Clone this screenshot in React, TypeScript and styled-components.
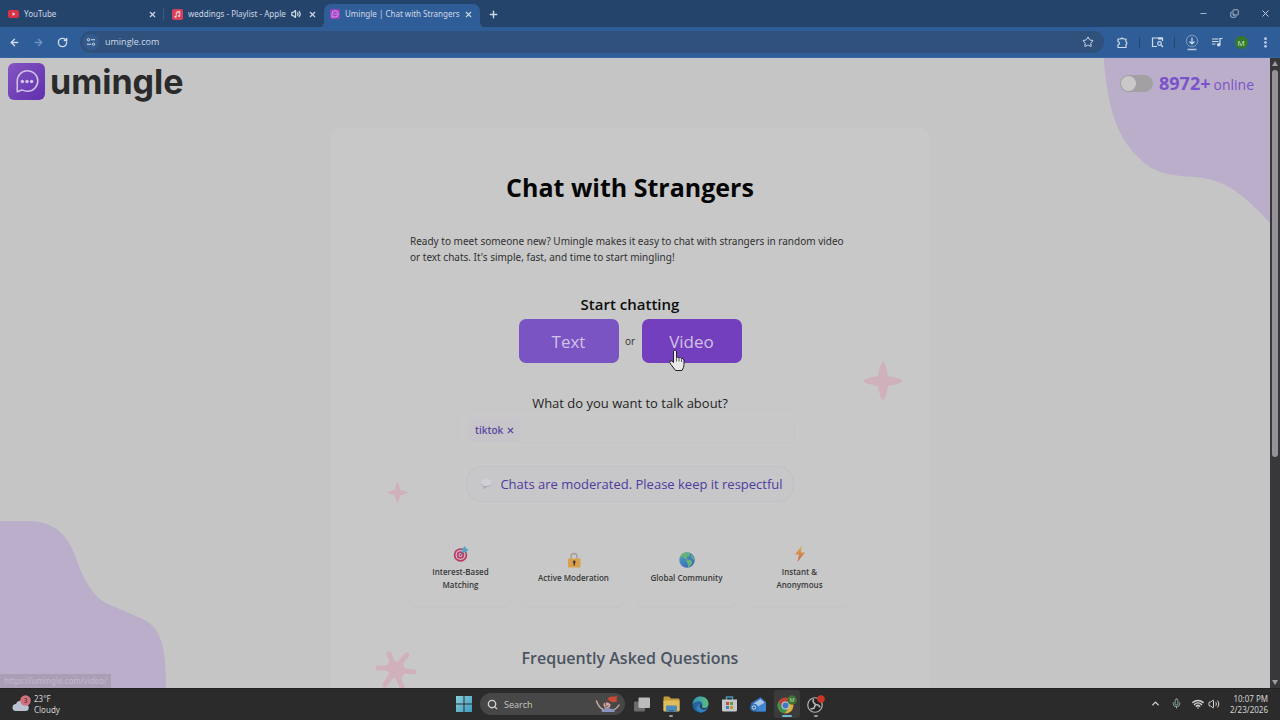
import React from 'react';
import styled, { createGlobalStyle } from 'styled-components';
import {
  ArrowLeft, ArrowRight, RotateCw, X, Plus, Minus, Volume2, Star, EllipsisVertical,
  Search, ChevronUp, Mic, Wifi, Copy,
} from 'lucide-react';

const Global = createGlobalStyle`
  *, *::before, *::after { box-sizing: border-box; }
  html, body, #root { height: 100%; }
  body { margin: 0; font-family: "Open Sans", "Noto Sans", sans-serif; color: #303030; background: #c5c5c5; }
  h1, h2, h3, p, ul { margin: 0; padding: 0; }
  button, input { font: inherit; color: inherit; border: 0; padding: 0; background: none; outline: none; }
  svg { display: block; flex: none; }
`;

const Screen = styled.div`
  height: 100vh;
  display: flex;
  flex-direction: column;
  overflow: hidden;
`;

/* ---------- browser chrome ---------- */

const TabStrip = styled.div`
  display: flex;
  height: 28px;
  flex: none;
  background: #25446c;
  color: #cfd9e6;
  border-bottom: 1px solid #2f5d97;
`;

const Tab = styled.div<{ $active?: boolean; $width: number; $divider?: boolean }>`
  position: relative;
  display: flex;
  align-items: center;
  gap: 5px;
  width: ${p => p.$width}px;
  height: 24px;
  margin-top: 4px;
  padding: 0 6px 4px ${p => (p.$active ? 6 : 8)}px;
  border-radius: 7px 7px 0 0;
  background: ${p => (p.$active ? '#2f5d97' : 'transparent')};
  font-family: "Noto Sans", sans-serif;
  font-size: 8px;
  line-height: 12px;
  ${p => p.$divider && `
    &::after {
      content: '';
      position: absolute;
      right: 0;
      top: 4px;
      width: 1px;
      height: 12px;
      background: #3c5c86;
    }
  `}
  ${p => p.$active && `
    &::before, &::after {
      content: '';
      position: absolute;
      bottom: 0;
      width: 6px;
      height: 6px;
    }
    &::before { left: -6px; background: radial-gradient(circle at 0 0, transparent 6px, #2f5d97 6px); }
    &::after { right: -6px; background: radial-gradient(circle at 100% 0, transparent 6px, #2f5d97 6px); }
  `}
`;

const TabTitle = styled.span`
  flex: 1;
  min-width: 0;
  white-space: nowrap;
`;

const TabControls = styled.div`
  display: flex;
  gap: 4px;
`;

const IconButton = styled.button<{ $size?: number }>`
  display: flex;
  align-items: center;
  justify-content: center;
  flex: none;
  width: ${p => p.$size ?? 12}px;
  height: ${p => p.$size ?? 12}px;
`;

const NewTab = styled(IconButton)`
  margin: 5px 0 0 4px;
`;

const WindowControls = styled.div`
  display: flex;
  gap: 15px;
  margin: 5px 7px 0 auto;
`;

const Toolbar = styled.div`
  display: flex;
  align-items: center;
  height: 30px;
  flex: none;
  padding: 0 7px 1px 6px;
  background: #2f5d97;
  color: #cfdcec;
  border-bottom: 1px solid #3668a6;
`;

const NavButtons = styled.div`
  display: flex;
  gap: 8px;
  margin-right: 10px;
`;

const Address = styled.label`
  display: flex;
  align-items: center;
  flex: 1;
  gap: 6px;
  height: 22px;
  padding: 0 10px 0 3px;
  border-radius: 11px;
  background: #30517c;
`;

const SiteInfo = styled.span`
  display: flex;
  align-items: center;
  justify-content: center;
  width: 16px;
  height: 16px;
  border-radius: 8px;
  background: #345b8c;
`;

const AddressInput = styled.input`
  flex: 1;
  min-width: 0;
  font-size: 9px;
  line-height: 16px;
`;

const Extensions = styled.div`
  display: flex;
  align-items: center;
  gap: 8px;
  margin-left: 9px;
`;

const Divider = styled.span`
  width: 1px;
  height: 11px;
  background: #24466f;
`;

const Avatar = styled.span`
  display: flex;
  align-items: center;
  justify-content: center;
  width: 13px;
  height: 13px;
  border-radius: 7px;
  background: #357a2c;
  color: #d5e2d0;
  font-size: 8px;
`;

/* ---------- page ---------- */

const Viewport = styled.div`
  position: relative;
  display: flex;
  flex: 1;
  min-height: 0;
`;

const Page = styled.div`
  position: relative;
  flex: 1;
  min-width: 0;
  overflow: hidden;
  background: #c5c5c5;
  padding-right: 10px;
`;

const Blob = styled.svg<{ $corner: 'top' | 'bottom' }>`
  position: absolute;
  ${p => (p.$corner === 'top' ? 'top: 0; right: 0;' : 'bottom: 0; left: 0;')}
`;

const Header = styled.header`
  position: relative;
  display: flex;
  justify-content: space-between;
  height: 70px;
  padding: 5px 6px 0 8px;
`;

const Brand = styled.a`
  display: flex;
  align-items: flex-start;
  gap: 5px;
  color: #2a2a2b;
  text-decoration: none;
`;

const BrandName = styled.span`
  font-family: Inter, "Open Sans", sans-serif;
  font-size: 34px;
  font-weight: 700;
  line-height: 38px;
`;

const Online = styled.label`
  display: flex;
  align-items: center;
  gap: 3px;
  height: 40px;
  color: #7a52c9;
  font-size: 14px;
  line-height: 20px;
`;

const OnlineWord = styled.span`
  padding-top: 3px;
`;

const Toggle = styled.input`
  appearance: none;
  width: 33px;
  height: 17px;
  margin: 0 3px 0 0;
  padding: 1px;
  border-radius: 9px;
  background: #a2a0a3;
  &::before {
    content: '';
    display: block;
    width: 15px;
    height: 15px;
    border-radius: 8px;
    background: #cac8c9;
  }
`;

const Count = styled.strong`
  font-size: 18px;
`;

const Card = styled.main`
  position: relative;
  width: 598px;
  max-width: 100%;
  margin: 0 auto;
  padding: 39px 79px 40px;
  background: #c8c8c8;
  border-radius: 8px;
  display: flex;
  flex-direction: column;
  align-items: center;
`;

const Title = styled.h1`
  color: #050505;
  font-size: 25px;
  font-weight: 700;
  line-height: 40px;
`;

const Intro = styled.p`
  align-self: stretch;
  margin: 26px 0 29px;
  font-family: "Noto Sans", sans-serif;
  font-size: 10px;
  line-height: 16px;
`;

const StartHeading = styled.h2`
  color: #0c0c0c;
  font-size: 15px;
  font-weight: 600;
  line-height: 20px;
`;

const Choices = styled.div`
  display: flex;
  align-items: center;
  justify-content: center;
  margin: 5px 0 30px;
  font-size: 10px;
`;

const Or = styled.span`
  width: 23px;
  text-align: center;
`;

const ChatButton = styled.button<{ $hover?: boolean }>`
  position: relative;
  width: 100px;
  height: 44px;
  border-radius: 7px;
  background: ${p => (p.$hover ? '#743fbe' : '#7b54c4')};
  color: #d0c2e4;
  font-size: 17px;
`;

const Pointer = styled.svg`
  position: absolute;
  left: 27px;
  top: 30px;
`;

const TopicLabel = styled.label`
  font-size: 13px;
  line-height: 20px;
  color: #252525;
`;

const TopicField = styled.div`
  display: flex;
  align-items: center;
  gap: 6px;
  width: 336px;
  height: 32px;
  margin: 1px 0 20px;
  padding: 0 6px;
  border: 1px solid #cccccc;
  border-radius: 7px;
`;

const Tag = styled.span`
  display: flex;
  align-items: center;
  gap: 3px;
  height: 24px;
  padding: 0 6px;
  border-radius: 6px;
  background: #c7c5ca;
  color: #5a459f;
  font-size: 10px;
  font-weight: 600;
`;

const TopicInput = styled.input`
  flex: 1;
  min-width: 0;
  font-size: 10px;
`;

const Notice = styled.p`
  display: flex;
  align-items: center;
  gap: 7px;
  height: 36px;
  padding: 0 10px 0 13px;
  border: 1px solid #c0c0c4;
  border-radius: 16px;
  background: #c7c7c9;
  color: #4f3a9f;
  font-size: 13px;
`;

const Features = styled.ul`
  display: grid;
  grid-template-columns: repeat(4, 1fr);
  gap: 12px;
  width: 100%;
  margin: 32px 0 38px;
  list-style: none;
`;

const Feature = styled.li`
  display: flex;
  flex-direction: column;
  align-items: center;
  justify-content: center;
  gap: 3px;
  height: 72px;
  padding-bottom: 4px;
  border-radius: 8px;
  box-shadow: 0 2px 3px rgba(0, 0, 0, 0.02);
  color: #383838;
  font-size: 8px;
  font-weight: 600;
  line-height: 13px;
  text-align: center;
`;

const FeatureText = styled.span<{ $narrow?: boolean }>`
  max-width: ${p => (p.$narrow ? 64 : 96)}px;
`;

const FaqHeading = styled.h2`
  color: #4a5460;
  font-size: 16px;
  font-weight: 600;
  line-height: 28px;
`;

const Sparkle = styled.svg<{ $x: number; $y: number }>`
  position: absolute;
  left: ${p => p.$x}px;
  top: ${p => p.$y}px;
`;

const StatusBubble = styled.div`
  position: absolute;
  left: 0;
  bottom: 0;
  height: 14px;
  padding: 0 4px;
  background: #aa9eb7;
  color: #c2b8ce;
  font-family: "Noto Sans", sans-serif;
  font-size: 8px;
  line-height: 14px;
`;

const ScrollTrack = styled.div`
  display: flex;
  flex-direction: column;
  align-items: center;
  width: 10px;
  padding: 3px 0;
  background: #38373a;
`;

const ScrollThumb = styled.div`
  width: 6px;
  height: 62%;
  margin: 4px 0 auto;
  border-radius: 3px;
  background: #959397;
`;

/* ---------- taskbar ---------- */

const Taskbar = styled.footer`
  display: grid;
  grid-template-columns: 1fr auto 1fr;
  align-items: center;
  height: 32px;
  flex: none;
  background: #2b2b2b;
  border-top: 1px solid #222;
  color: #d4d4d4;
  font-size: 9px;
  line-height: 11px;
`;

const Weather = styled.div`
  display: flex;
  align-items: center;
  gap: 3px;
  padding: 0 0 1px 12px;
  font-family: "Noto Sans", sans-serif;
  font-size: 8px;
`;

const Dock = styled.nav`
  display: flex;
  align-items: center;
  gap: 3px;
  padding-bottom: 1px;
`;

const SearchBox = styled.label`
  display: flex;
  align-items: center;
  gap: 6px;
  width: 145px;
  height: 22px;
  margin: 0 1px 0 0;
  padding: 0 4px 0 7px;
  border-radius: 11px;
  background: #474747;
`;

const SearchInput = styled.input`
  flex: 1;
  min-width: 0;
  font-size: 9px;
  &::placeholder { color: #c6c6c6; opacity: 1; }
`;

const DockButton = styled.button<{ $mark?: 'open' | 'active' }>`
  position: relative;
  display: flex;
  align-items: center;
  justify-content: center;
  width: 26px;
  height: 28px;
  border-radius: 3px;
  background: ${p => (p.$mark === 'active' ? '#3b3b3b' : 'transparent')};
  ${p => p.$mark && `
    &::after {
      content: '';
      position: absolute;
      bottom: 1px;
      width: ${p.$mark === 'active' ? 10 : 4}px;
      height: 2px;
      border-radius: 1px;
      background: ${p.$mark === 'active' ? '#6fb7d2' : '#9b9b9b'};
    }
  `}
`;

const Tray = styled.div`
  display: flex;
  align-items: center;
  justify-content: flex-end;
  padding: 0 12px 2px 0;
`;

const TrayIcons = styled.div`
  display: flex;
  align-items: center;
  gap: 10px;
`;

const NetworkIcons = styled.div`
  display: flex;
  gap: 4px;
`;

const Clock = styled.time`
  margin-left: 10px;
  font-family: "Noto Sans", sans-serif;
  font-size: 8px;
  text-align: right;
`;

/* ---------- drawings ---------- */

const YouTubeIcon = () => (
  <svg width="11" height="8" viewBox="0 0 22 16">
    <rect width="22" height="16" rx="4" fill="#dc3045" />
    <path d="M9 4.5 15 8l-6 3.5z" fill="#e6dfe4" />
  </svg>
);

const MusicIcon = () => (
  <svg width="11" height="11" viewBox="0 0 22 22">
    <rect width="22" height="22" rx="4" fill="#d8405a" />
    <path d="M8.5 15V6l7-1.500v9" fill="none" stroke="#e8d5dc" strokeWidth="1.800" />
    <path d="M8.500 8.500l7-1.500" stroke="#e8d5dc" strokeWidth="1.800" />
    <ellipse cx="7" cy="15.500" rx="2.300" ry="1.900" fill="#e8d5dc" />
    <ellipse cx="14" cy="14" rx="2.300" ry="1.900" fill="#e8d5dc" />
  </svg>
);

const Bubble = ({ size }: { size: number }) => (
  <svg width={size} height={size} viewBox="0 0 36 36">
    <defs>
      <linearGradient id="brand" x1="0" y1="0" x2="1" y2="1">
        <stop offset="0" stopColor="#8454c4" />
        <stop offset="1" stopColor="#5f30ac" />
      </linearGradient>
    </defs>
    <rect width="36" height="36" rx="6" fill="url(#brand)" />
    <path d="M9 28V18a10 10 0 1 1 10 9.500c-2.500 0-4-.5-5.500-1.300Z" fill="none" stroke="#d3c3e6" strokeWidth="1.500" strokeLinejoin="round" />
    <circle cx="14" cy="18" r="1.700" fill="#d3c3e6" />
    <circle cx="18.500" cy="18" r="1.700" fill="#d3c3e6" />
    <circle cx="23" cy="18" r="1.700" fill="#d3c3e6" />
  </svg>
);

const TabBubble = () => (
  <svg width="10" height="10" viewBox="0 0 20 20">
    <rect width="20" height="20" rx="3" fill="#a03fc0" />
    <path d="M4 16v-6a6.200 6.200 0 1 1 6 6Z" fill="none" stroke="#d9bdec" strokeWidth="1.600" />
    <path d="M7 10h7" stroke="#d9bdec" strokeWidth="2" strokeDasharray="1.600 1" />
  </svg>
);

const TuneIcon = () => (
  <svg width="10" height="10" viewBox="0 0 20 20" fill="none" stroke="#cfdcec" strokeWidth="2">
    <circle cx="5" cy="5.500" r="2.300" />
    <path d="M10 5.500h8M2 14.500h8" />
    <circle cx="15" cy="14.500" r="2.300" />
  </svg>
);

const PuzzleIcon = () => (
  <svg width="13" height="13" viewBox="0 0 26 26" fill="none" stroke="#cfdcec" strokeWidth="2.400" strokeLinejoin="round">
    <path d="M4 6h5.500a2.600 2.600 0 0 1 5 0H20v6a2.600 2.600 0 0 1 0 5v6H4v-5.500a3 3 0 0 0 0-6Z" />
  </svg>
);

const LensIcon = () => (
  <svg width="13" height="12" viewBox="0 0 26 24" fill="none" stroke="#cfdcec" strokeWidth="2.400">
    <path d="M12 21H3V4h20v6" />
    <path d="M14 5h9" strokeWidth="4" />
    <circle cx="17" cy="15" r="3.600" />
    <path d="m20 18 4 4" />
  </svg>
);

const DownloadIcon = () => (
  <svg width="14" height="18" viewBox="0 0 28 36" fill="none" stroke="#b4c8de" strokeWidth="2">
    <circle cx="14" cy="16" r="11.500" stroke="#7f9cc0" />
    <path d="M14 9v13M9 17l5 5 5-5" stroke="#cfdcec" strokeWidth="2.400" />
    <path d="M5 33h18" strokeWidth="3" />
  </svg>
);

const QueueIcon = () => (
  <svg width="12" height="12" viewBox="0 0 24 24" fill="none" stroke="#cfdcec" strokeWidth="2.400">
    <path d="M2 6h13M2 11h13M2 16h7M18 17V5h5" />
    <circle cx="15.500" cy="17.500" r="2.400" fill="#cfdcec" />
  </svg>
);

const TargetIcon = () => (
  <svg width="16" height="16" viewBox="0 0 32 32">
    <circle cx="15" cy="18" r="13.500" fill="#b93a68" />
    <circle cx="15" cy="18" r="10" fill="#d5c3cb" />
    <circle cx="15" cy="18" r="7.500" fill="#b93a68" />
    <circle cx="15" cy="18" r="4" fill="#d5c3cb" />
    <circle cx="15" cy="18" r="2" fill="#b93a68" />
    <path d="m15 18 8-9" stroke="#3d6c93" strokeWidth="2" />
    <path d="m19 13-1-7 6-6 2 5 5 2-6 6z" fill="#51a5c6" />
  </svg>
);

const LockIcon = () => (
  <svg width="16" height="16" viewBox="0 0 32 32">
    <path d="M10 15V9a6 6 0 0 1 12 0v6" fill="none" stroke="#a3a09b" strokeWidth="3" />
    <rect x="4" y="13" width="25" height="18" rx="2" fill="#d8a04a" />
    <circle cx="16.500" cy="20" r="2.800" fill="#4a3543" />
    <path d="M16.500 21v6" stroke="#4a3543" strokeWidth="2.600" />
  </svg>
);

const GlobeIcon = () => (
  <svg width="16" height="16" viewBox="0 0 32 32">
    <defs>
      <linearGradient id="sea" x1="0" y1="0" x2="1" y2="1">
        <stop offset="0" stopColor="#4fa0c4" />
        <stop offset="1" stopColor="#3560b5" />
      </linearGradient>
    </defs>
    <circle cx="16" cy="16" r="15.500" fill="url(#sea)" />
    <path d="M8 3c5-3 12-2 15 0l-2 5-6 2 2 5-5-1-4-4-6 2c0-4 3-7 6-9ZM16 15l8 1 3 5-6 9-3-1-1-7-3-4z" fill="#65b277" />
    <path d="m25 5 4 5 1 7-4-4-2-4z" fill="#65b277" />
  </svg>
);

const BoltIcon = () => (
  <svg width="16" height="16" viewBox="0 0 32 32">
    <defs>
      <linearGradient id="bolt" x1="0" y1="0" x2="0" y2="1">
        <stop offset="0" stopColor="#dfae50" />
        <stop offset="1" stopColor="#c96342" />
      </linearGradient>
    </defs>
    <path d="M19 0 6 17h8l-3 15L26 13h-8z" fill="url(#bolt)" />
  </svg>
);

const SpeechIcon = () => (
  <svg width="13" height="12" viewBox="0 0 26 24">
    <path d="M24 9c0 5-5 9-11 9l-7 5 1-6C4 15 2 12 2 9Z" fill="#a9a7b0" />
    <ellipse cx="13" cy="9" rx="11" ry="7.500" fill="#cfced4" />
  </svg>
);

const WeatherIcon = () => (
  <svg width="19" height="18" viewBox="0 0 38 36">
    <path d="M8 32a7 7 0 0 1 0-14 10 10 0 0 1 19 1 6.500 6.500 0 0 1 0 13Z" fill="#b9c3d2" />
    <circle cx="27" cy="11" r="10.500" fill="#d3737f" />
    <text x="27" y="16" fontSize="14" textAnchor="middle" fill="#42242b">3</text>
  </svg>
);

const WindowsIcon = () => (
  <svg width="16" height="16" viewBox="0 0 32 32">
    <defs>
      <linearGradient id="win" x1="0" y1="0" x2="1" y2="1">
        <stop offset="0" stopColor="#88cbdc" />
        <stop offset="1" stopColor="#3d9ec0" />
      </linearGradient>
    </defs>
    <path d="M0 0h15v15H0zM17 0h15v15H17zM0 17h15v15H0zM17 17h15v15H17z" fill="url(#win)" />
  </svg>
);

const ActorIcon = () => (
  <svg width="26" height="18" viewBox="0 0 52 36">
    <path d="M3 12q4 12 13 17M48 20q-4 7-11 10" fill="none" stroke="#c8a79b" strokeWidth="3" strokeLinecap="round" />
    <path d="M13 34q1-9 13-8t14 8Z" fill="#8a92bd" />
    <circle cx="24" cy="19" r="7" fill="#d3b0a5" />
    <path d="M16 17q0-6 9-7l8 4-2 5-5-4q-5 0-10 2Z" fill="#5b4248" />
    <path d="M25 8q2-5 9-5h11l-2 5 1 5q-7 3-13 0Z" fill="#c94a35" />
    <circle cx="21" cy="18" r="1.500" fill="#342c35" />
    <path d="M20 22q4 2 7-1" stroke="#783441" strokeWidth="2" fill="none" />
  </svg>
);

const TaskViewIcon = () => (
  <svg width="16" height="15" viewBox="0 0 32 30">
    <rect y="9" width="22" height="20" rx="2" fill="#6c6c6c" />
    <rect x="9" y="1" width="23" height="21" rx="2" fill="#bcbcbc" />
  </svg>
);

const FolderIcon = () => (
  <svg width="17" height="16" viewBox="0 0 34 32">
    <path d="M1 3q0-2 2-2h9l4 4h15q2 0 2 2v22H1Z" fill="#c59b3c" />
    <path d="M1 9h32v20q0 2-2 2H3q-2 0-2-2Z" fill="#dfbd5c" />
    <path d="M6 31V21q0-2 2-2h18q2 0 2 2v10Z" fill="#4b89bb" />
    <path d="M12 31v-3h10v3Z" fill="#336a9b" />
  </svg>
);

const EdgeIcon = () => (
  <svg width="17" height="17" viewBox="0 0 34 34">
    <defs>
      <linearGradient id="edge" x1="0" y1="0" x2="1" y2="0">
        <stop offset="0" stopColor="#3090c2" />
        <stop offset="1" stopColor="#5dbd78" />
      </linearGradient>
    </defs>
    <circle cx="17" cy="17" r="16" fill="#25639f" />
    <path d="M1 17C2 6 9 1 17 1c10 0 16 7 16 14 0 6-5 9-10 9-4 0-5-2-3-4 4-6-5-12-12-8-4 1-6 3-7 5Z" fill="url(#edge)" />
    <path d="M16 16q-4 8 6 12 5 1 9-3-5 8-14 8Q5 28 11 19q2-3 5-3Z" fill="#347fc0" />
    <path d="M17 17q-2 7 5 9 5 1 8-2-4 1-8 0-4-1-2-4 1-2-3-3Z" fill="#27343d" />
  </svg>
);

const StoreIcon = () => (
  <svg width="17" height="16" viewBox="0 0 34 32">
    <path d="M11 8V2h12v6" fill="none" stroke="#4b93b9" strokeWidth="3" />
    <path d="M2 7h30v21q0 3-3 3H5q-3 0-3-3Z" fill="#c3c7cb" />
    <path d="M10 12h6v6h-6z" fill="#c24d36" />
    <path d="M18 12h6v6h-6z" fill="#6a9c39" />
    <path d="M10 20h6v6h-6z" fill="#3984b2" />
    <path d="M18 20h6v6h-6z" fill="#c99834" />
  </svg>
);

const MailIcon = () => (
  <svg width="17" height="16" viewBox="0 0 34 32">
    <path d="m2 14 19-12 11 10v17q0 2-2 2H8q-4 0-6-4Z" fill="#336bb8" />
    <path d="m7 15 14-9 8 6-5 10H9Z" fill="#a7c5e4" />
    <path d="m12 23 20-11v17q0 2-2 2H12Z" fill="#3f86d0" />
    <circle cx="8" cy="23" r="7.500" fill="#3271b6" />
    <circle cx="8" cy="23" r="3.500" fill="none" stroke="#c3d6ea" strokeWidth="2" />
  </svg>
);

const ChromeIcon = () => (
  <svg width="20" height="19" viewBox="0 0 40 38">
    <circle cx="17" cy="21" r="16" fill="#bd4237" />
    <path d="M3 13a16 16 0 0 0 13 24l8-13H10Z" fill="#3c924c" />
    <path d="M16 37a16 16 0 0 0 15-23H17l7 10Z" fill="#d7af3e" />
    <circle cx="17" cy="21" r="8" fill="#c9cdd1" />
    <circle cx="17" cy="21" r="6" fill="#3c78c6" />
    <circle cx="30" cy="10" r="9.500" fill="#3d7430" />
    <text x="30" y="14" fontSize="11" textAnchor="middle" fill="#c5d8be">M</text>
  </svg>
);

const ObsIcon = () => (
  <svg width="18" height="18" viewBox="0 0 36 36">
    <circle cx="16" cy="20" r="14.500" fill="#242424" stroke="#b5b5b5" strokeWidth="2.400" />
    <path d="M13 8q-3 7 4 10M26 25q-3-7-9-5M7 27q8 2 9-6M17 18l-2 4" fill="none" stroke="#b5b5b5" strokeWidth="3.200" />
    <circle cx="28" cy="8" r="7.500" fill="#cf3428" />
  </svg>
);

const HandPointer = () => (
  <Pointer width="16" height="22" viewBox="0 0 32 44">
    <path d="M9 4q3-4 6 0v13q3-2 5 1 3-2 5 1 4-1 5 3v9q0 5-4 12H13L4 31q-4-5-2-7 3-2 7 3Z" fill="#e9e9e9" stroke="#24202b" strokeWidth="2" strokeLinejoin="round" />
    <path d="M15 18v7M20 19v6M25 20v6" stroke="#24202b" strokeWidth="1.400" />
  </Pointer>
);

const STAR = 'M20 0Q23 3 25 15Q37 17 40 20Q37 23 25 25Q23 37 20 40Q17 37 15 25Q3 23 0 20Q3 17 15 15Q17 3 20 0Z';

const features = [
  { icon: <TargetIcon />, text: 'Interest-Based Matching', narrow: true },
  { icon: <LockIcon />, text: 'Active Moderation' },
  { icon: <GlobeIcon />, text: 'Global Community' },
  { icon: <BoltIcon />, text: 'Instant & Anonymous', narrow: true },
];

export default function App() {
  return (
    <Screen>
      <Global />
      <TabStrip>
        <Tab $width={164} $divider>
          <YouTubeIcon />
          <TabTitle>YouTube</TabTitle>
          <IconButton aria-label="Close YouTube"><X size={9} strokeWidth={3} /></IconButton>
        </Tab>
        <Tab $width={160}>
          <MusicIcon />
          <TabTitle>weddings - Playlist - Apple</TabTitle>
          <TabControls>
            <IconButton aria-label="Mute tab"><Volume2 size={10} strokeWidth={3} /></IconButton>
            <IconButton aria-label="Close playlist"><X size={9} strokeWidth={3} /></IconButton>
          </TabControls>
        </Tab>
        <Tab $width={156} $active>
          <TabBubble />
          <TabTitle>Umingle | Chat with Strangers</TabTitle>
          <IconButton aria-label="Close Umingle"><X size={9} strokeWidth={3} /></IconButton>
        </Tab>
        <NewTab aria-label="New tab" $size={18}><Plus size={11} strokeWidth={3} /></NewTab>
        <WindowControls>
          <IconButton aria-label="Minimize" $size={16}><Minus size={9} /></IconButton>
          <IconButton aria-label="Restore" $size={16}><Copy size={9} transform="scale(1 -1)" /></IconButton>
          <IconButton aria-label="Close window" $size={16}><X size={11} strokeWidth={2} /></IconButton>
        </WindowControls>
      </TabStrip>
      <Toolbar>
        <NavButtons>
          <IconButton aria-label="Back" $size={16}><ArrowLeft size={11} strokeWidth={3} /></IconButton>
          <IconButton aria-label="Forward" $size={16}><ArrowRight size={11} strokeWidth={3} color="#6f93bf" /></IconButton>
          <IconButton aria-label="Reload" $size={16}><RotateCw size={11} strokeWidth={3} /></IconButton>
        </NavButtons>
        <Address>
          <SiteInfo><TuneIcon /></SiteInfo>
          <AddressInput aria-label="Address" defaultValue="umingle.com" />
          <Star size={12} />
        </Address>
        <Extensions>
          <IconButton aria-label="Extensions" $size={18}><PuzzleIcon /></IconButton>
          <Divider />
          <IconButton aria-label="Search page" $size={18}><LensIcon /></IconButton>
          <Divider />
          <IconButton aria-label="Downloads" $size={18}><DownloadIcon /></IconButton>
          <IconButton aria-label="Media" $size={16}><QueueIcon /></IconButton>
          <IconButton aria-label="Profile" $size={16}><Avatar>M</Avatar></IconButton>
          <IconButton aria-label="Menu" $size={16}><EllipsisVertical size={13} strokeWidth={3} /></IconButton>
        </Extensions>
      </Toolbar>

      <Viewport>
        <Page>
          <Blob $corner="top" width="166" height="165" viewBox="0 0 166 165">
            <path d="M0 0C2 38 10 75 32 97C48 114 60 117 90 119C123 121 142 139 166 165V0Z" fill="#bbaeca" />
          </Blob>
          <Blob $corner="bottom" width="166" height="167" viewBox="0 0 166 167">
            <path d="M0 0H30C55 1 68 14 76 37C84 60 94 77 108 83L138 96C162 105 166 125 166 167H0Z" fill="#bbaeca" />
          </Blob>
          <Header>
            <Brand href="#">
              <Bubble size={37} />
              <BrandName>umingle</BrandName>
            </Brand>
            <Online>
              <Toggle type="checkbox" role="switch" />
              <Count>8972+</Count>
              <OnlineWord>online</OnlineWord>
            </Online>
          </Header>
          <Card>
            <Sparkle $x={532} $y={233} width="40" height="40" viewBox="0 0 40 40">
              <path d={STAR} fill="#cfb0bb" />
            </Sparkle>
            <Sparkle $x={56} $y={354} width="21" height="21" viewBox="0 0 40 40">
              <path d={STAR} fill="#cfb0bb" />
            </Sparkle>
            <Sparkle $x={44} $y={522} width="42" height="40" viewBox="0 0 42 40">
              <path d="M20 18 14 4M20 18 32 5M20 20 39 22M20 20 27 37M20 20 10 35M20 18 3 18" stroke="#cfb0bb" strokeWidth="5" strokeLinecap="round" />
              <path d="m15 11 6 1 6-2 2 7 4 4-5 4-2 5-6-2-6 2 0-7-4-6Z" fill="#cfb0bb" />
            </Sparkle>
            <Title>Chat with Strangers</Title>
            <Intro>
              Ready to meet someone new? Umingle makes it easy to chat with strangers in random video
              or text chats. It's simple, fast, and time to start mingling!
            </Intro>
            <StartHeading>Start chatting</StartHeading>
            <Choices>
              <ChatButton>Text</ChatButton>
              <Or>or</Or>
              <ChatButton $hover>Video<HandPointer /></ChatButton>
            </Choices>
            <TopicLabel htmlFor="topic">What do you want to talk about?</TopicLabel>
            <TopicField>
              <Tag>
                tiktok
                <IconButton aria-label="Remove tiktok" $size={9}><X size={9} strokeWidth={3} /></IconButton>
              </Tag>
              <TopicInput id="topic" />
            </TopicField>
            <Notice><SpeechIcon />Chats are moderated. Please keep it respectful</Notice>
            <Features>
              {features.map(f => (
                <Feature key={f.text}>
                  {f.icon}
                  <FeatureText $narrow={f.narrow}>{f.text}</FeatureText>
                </Feature>
              ))}
            </Features>
            <FaqHeading>Frequently Asked Questions</FaqHeading>
          </Card>
        </Page>
        <ScrollTrack>
          <svg width="6" height="5" viewBox="0 0 6 5"><path d="M3 0 6 5H0Z" fill="#a09ea2" /></svg>
          <ScrollThumb />
          <svg width="6" height="5" viewBox="0 0 6 5"><path d="M3 5 6 0H0Z" fill="#a09ea2" /></svg>
        </ScrollTrack>
        <StatusBubble>https://umingle.com/video/</StatusBubble>
      </Viewport>

      <Taskbar>
        <Weather>
          <WeatherIcon />
          <div>23°F<br />Cloudy</div>
        </Weather>
        <Dock>
          <DockButton aria-label="Start"><WindowsIcon /></DockButton>
          <SearchBox>
            <Search size={11} strokeWidth={3} />
            <SearchInput aria-label="Search" placeholder="Search" />
            <ActorIcon />
          </SearchBox>
          <DockButton aria-label="Task view"><TaskViewIcon /></DockButton>
          <DockButton aria-label="Files" $mark="open"><FolderIcon /></DockButton>
          <DockButton aria-label="Edge"><EdgeIcon /></DockButton>
          <DockButton aria-label="Store"><StoreIcon /></DockButton>
          <DockButton aria-label="Mail"><MailIcon /></DockButton>
          <DockButton aria-label="Chrome" $mark="active"><ChromeIcon /></DockButton>
          <DockButton aria-label="OBS" $mark="open"><ObsIcon /></DockButton>
        </Dock>
        <Tray>
          <TrayIcons>
            <ChevronUp size={11} strokeWidth={3} />
            <Mic size={11} color="#8fb5a6" />
            <NetworkIcons>
              <Wifi size={12} strokeWidth={3} />
              <Volume2 size={12} />
            </NetworkIcons>
          </TrayIcons>
          <Clock>10:07 PM<br />2/23/2026</Clock>
        </Tray>
      </Taskbar>
    </Screen>
  );
}
